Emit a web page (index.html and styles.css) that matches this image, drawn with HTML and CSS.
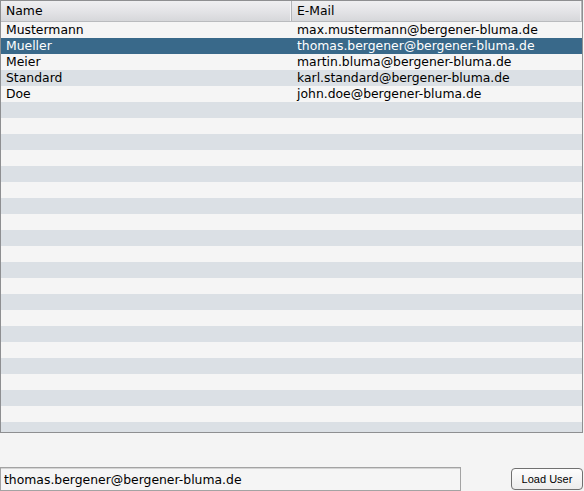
FILE: index.html
```html
<!DOCTYPE html>
<html>
<head>
<meta charset="utf-8">
<link rel="stylesheet" href="styles.css">
</head>
<body>
<div class="app">
  <div class="table">
    <div class="thead">
      <div class="th">Name</div>
      <div class="th">E-Mail</div>
    </div>
    <div class="tbody">
      <div class="row"><div class="td">Mustermann</div><div class="td">max.mustermann@bergener-bluma.de</div></div>
      <div class="row selected"><div class="td">Mueller</div><div class="td">thomas.bergener@bergener-bluma.de</div></div>
      <div class="row"><div class="td">Meier</div><div class="td">martin.bluma@bergener-bluma.de</div></div>
      <div class="row"><div class="td">Standard</div><div class="td">karl.standard@bergener-bluma.de</div></div>
      <div class="row"><div class="td">Doe</div><div class="td">john.doe@bergener-bluma.de</div></div>
      <div class="row"></div><div class="row"></div><div class="row"></div><div class="row"></div><div class="row"></div>
      <div class="row"></div><div class="row"></div><div class="row"></div><div class="row"></div><div class="row"></div>
      <div class="row"></div><div class="row"></div><div class="row"></div><div class="row"></div><div class="row"></div>
      <div class="row"></div><div class="row"></div><div class="row"></div><div class="row"></div><div class="row"></div>
      <div class="row"></div>
    </div>
  </div>
  <div class="bottom">
    <input class="field" type="text" value="thomas.bergener@bergener-bluma.de">
    <button class="btn">Load User</button>
  </div>
</div>
</body>
</html>
```
FILE: styles.css
```css
html, body {
  margin: 0;
  padding: 0;
  background: #f4f4f4;
}
.app {
  width: 583px;
  height: 491px;
  display: flex;
  flex-direction: column;
  font-family: "DejaVu Sans", sans-serif;
  font-size: 12.4px;
  color: #000;
}
.table {
  box-sizing: border-box;
  height: 433px;
  border: 1px solid #8e8f91;
  overflow: hidden;
  background: #f5f5f5;
}
.thead {
  display: grid;
  grid-template-columns: 291px 1fr;
  height: 20px;
  border-bottom: 1px solid #b9bbbe;
  background: linear-gradient(#efeff1, #e4e4e7 50%, #d6d7da);
}
.th {
  box-sizing: border-box;
  padding-left: 5px;
  line-height: 20px;
  border-right: 1px solid #b3b5b8;
  box-shadow: inset -1px 0 0 #f4f4f6;
}
.row {
  display: grid;
  grid-template-columns: 291px 1fr;
  height: 16px;
  line-height: 16px;
  background: #f5f5f5;
}
.row:nth-child(even) {
  background: #dbe0e5;
}
.row.selected {
  background: #39698a;
  color: #fff;
}
.td {
  padding-left: 5px;
  white-space: nowrap;
}
.bottom {
  margin-top: auto;
  display: flex;
  align-items: center;
  justify-content: space-between;
}
.field {
  box-sizing: border-box;
  width: 461px;
  height: 24px;
  margin: 0;
  padding: 0 3px;
  border: 1px solid #a3a3a3;
  box-shadow: inset 0 1px 0 #d4d4d4;
  background: #f5f5f5;
  font-family: "DejaVu Sans", sans-serif;
  font-size: 12.4px;
  color: #000;
  outline: none;
}
.btn {
  box-sizing: border-box;
  width: 72px;
  height: 22px;
  margin: 0;
  padding: 0;
  border: 1px solid #707070;
  border-radius: 4px;
  background: linear-gradient(#fdfdfd, #ececec);
  font-family: "Liberation Sans", Arial, sans-serif;
  font-size: 11px;
  color: #000;
}
```
